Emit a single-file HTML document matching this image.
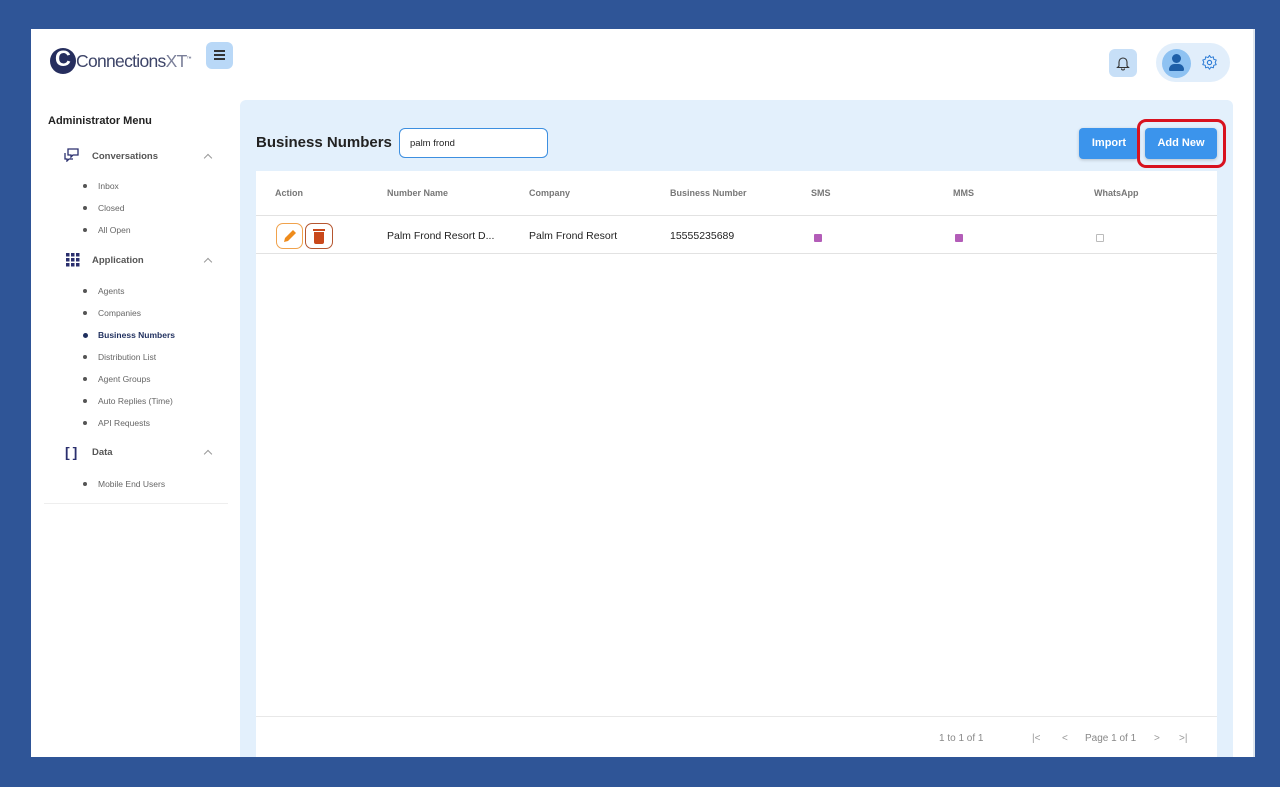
<!DOCTYPE html>
<html><head><style>
*{box-sizing:border-box;margin:0;padding:0}
body{width:1280px;height:787px;background:#2f5597;font-family:"Liberation Sans",Arial,sans-serif;position:relative;overflow:hidden}
.abs{position:absolute}
.page{left:31px;top:29px;width:1222px;height:728px;background:#fff}
.edge{left:1253px;top:29px;width:2px;height:728px;background:#dfe6ee}
.sub{position:absolute;font-size:8.5px;color:#666}
.dot{position:absolute;width:4px;height:4px;border-radius:50%;background:#555}
.hd{position:absolute;font-size:9.5px;color:#555;font-weight:bold}
.th{position:absolute;top:188px;font-size:9px;color:#777;font-weight:bold}
.td{position:absolute;top:230px;font-size:10.5px;color:#222}
.chev{position:absolute;width:6px;height:6px;border-left:1px solid #999;border-top:1px solid #999;transform:rotate(45deg)}
.cb{position:absolute;top:234px;width:8px;height:8px;border-radius:1px;background:#b35db8}
</style></head><body>
<div class="abs page"></div>
<div class="abs edge"></div>
<!-- logo -->
<div class="abs" style="left:50px;top:48px;width:26px;height:26px;border-radius:50%;background:#262e5e"></div>
<div class="abs" style="left:55px;top:46px;color:#fff;font-weight:bold;font-size:22px">C</div>
<div class="abs" style="left:76px;top:51px;font-size:17.5px;color:#3d4468;letter-spacing:-0.7px">Connections<span style="color:#7a7f99">XT</span><sup style="font-size:5px">™</sup></div>
<div class="abs" style="left:206px;top:42px;width:27px;height:27px;border-radius:6px;background:#b9d8f7"></div>
<div class="abs" style="left:214px;top:50px;width:11px;height:1.5px;background:#333;box-shadow:0 4px 0 #333,0 8px 0 #333"></div>
<!-- top right -->
<div class="abs" style="left:1109px;top:49px;width:28px;height:28px;border-radius:6px;background:#c7dff7"></div>
<svg class="abs" style="left:1116px;top:55px" width="14" height="16" viewBox="0 0 14 16"><path d="M3 11V7a4 4 0 0 1 8 0v4l1.5 1.5h-11z M5.5 13.5a1.5 1.5 0 0 0 3 0" fill="none" stroke="#333" stroke-width="1.1"/></svg>
<div class="abs" style="left:1156px;top:43px;width:74px;height:39px;border-radius:20px;background:#e1eefb"></div>
<div class="abs" style="left:1162px;top:49px;width:29px;height:29px;border-radius:50%;background:#8ec2f2"></div>
<div class="abs" style="left:1172px;top:54px;width:9px;height:9px;border-radius:50%;background:#1e5fa8"></div>
<div class="abs" style="left:1169px;top:64px;width:15px;height:7px;border-radius:7px 7px 2px 2px;background:#1e5fa8"></div>
<svg class="abs" style="left:1201px;top:54px" width="17" height="17" viewBox="0 0 24 24"><circle cx="12" cy="12" r="3" fill="none" stroke="#2d7cd6" stroke-width="1.6"/><path d="M12 2l2 3 3.5-1 .5 3.5 3.5 1-1.5 3.5 1.5 3-3.5 1-.5 3.5-3.5-1-2 3-2-3-3.5 1-.5-3.5-3.5-1 1.5-3.5L2.5 8.5 6 7.5 6.5 4 10 5z" fill="none" stroke="#2d7cd6" stroke-width="1.4" stroke-linejoin="round"/></svg>
<!-- sidebar -->
<div class="abs" style="left:48px;top:115px;font-size:11px;color:#222;font-weight:bold">Administrator Menu</div>
<svg class="abs" style="left:64px;top:148px" width="15" height="14" viewBox="0 0 15 14"><path d="M4 1h10v6h-5l-2 2V7H4z M1 5v6h2v2l2-2h4" fill="none" stroke="#2a2f6e" stroke-width="1.3"/></svg>
<div class="hd" style="left:92px;top:151px">Conversations</div>
<div class="chev" style="left:205px;top:155px"></div>
<div class="dot" style="left:83px;top:184px"></div><div class="sub" style="left:98px;top:181px">Inbox</div>
<div class="dot" style="left:83px;top:206px"></div><div class="sub" style="left:98px;top:203px">Closed</div>
<div class="dot" style="left:83px;top:228px"></div><div class="sub" style="left:98px;top:225px">All Open</div>
<svg class="abs" style="left:66px;top:253px" width="14" height="14" viewBox="0 0 14 14" fill="#2a2f6e"><rect x="0" y="0" width="3.5" height="3.5"/><rect x="5" y="0" width="3.5" height="3.5"/><rect x="10" y="0" width="3.5" height="3.5"/><rect x="0" y="5" width="3.5" height="3.5"/><rect x="5" y="5" width="3.5" height="3.5"/><rect x="10" y="5" width="3.5" height="3.5"/><rect x="0" y="10" width="3.5" height="3.5"/><rect x="5" y="10" width="3.5" height="3.5"/><rect x="10" y="10" width="3.5" height="3.5"/></svg>
<div class="hd" style="left:92px;top:255px">Application</div>
<div class="chev" style="left:205px;top:259px"></div>
<div class="dot" style="left:83px;top:289px"></div><div class="sub" style="left:98px;top:286px">Agents</div>
<div class="dot" style="left:83px;top:311px"></div><div class="sub" style="left:98px;top:308px">Companies</div>
<div class="dot" style="left:83px;top:333px;background:#1f2f5e;width:5px;height:5px"></div><div class="sub" style="left:98px;top:330px;color:#1f2f5e;font-weight:bold">Business Numbers</div>
<div class="dot" style="left:83px;top:355px"></div><div class="sub" style="left:98px;top:352px">Distribution List</div>
<div class="dot" style="left:83px;top:377px"></div><div class="sub" style="left:98px;top:374px">Agent Groups</div>
<div class="dot" style="left:83px;top:399px"></div><div class="sub" style="left:98px;top:396px">Auto Replies (Time)</div>
<div class="dot" style="left:83px;top:421px"></div><div class="sub" style="left:98px;top:418px">API Requests</div>
<div class="abs" style="left:65px;top:444px;font-size:14px;font-weight:bold;color:#2a2f6e;letter-spacing:3px">[]</div>
<div class="hd" style="left:92px;top:447px">Data</div>
<div class="chev" style="left:205px;top:451px"></div>
<div class="dot" style="left:83px;top:482px"></div><div class="sub" style="left:98px;top:479px">Mobile End Users</div>
<div class="abs" style="left:44px;top:503px;width:184px;height:1px;background:#eee"></div>
<!-- main -->
<div class="abs" style="left:240px;top:100px;width:993px;height:657px;background:#e3f0fc;border-radius:6px 6px 0 0"></div>
<div class="abs" style="left:256px;top:134px;font-size:15px;font-weight:bold;color:#222">Business Numbers</div>
<div class="abs" style="left:399px;top:128px;width:149px;height:30px;border:1.5px solid #3d8fe0;border-radius:6px;background:#fff;font-size:9.5px;padding:9px 10px;color:#222">palm frond</div>
<div class="abs" style="left:1079px;top:128px;width:60px;height:31px;border-radius:4px;background:#3b94ec;color:#fff;font-size:11px;font-weight:bold;text-align:center;line-height:31px;box-shadow:0 1px 3px rgba(0,0,0,.2)">Import</div>
<div class="abs" style="left:1145px;top:128px;width:72px;height:31px;border-radius:4px;background:#3b94ec;color:#fff;font-size:11px;font-weight:bold;text-align:center;line-height:31px;box-shadow:0 1px 3px rgba(0,0,0,.2)">Add New</div>
<div class="abs" style="left:1137px;top:119px;width:89px;height:49px;border:3px solid #d8121f;border-radius:9px"></div>
<div class="abs" style="left:256px;top:171px;width:961px;height:586px;background:#fff"></div>
<div class="th" style="left:275px">Action</div>
<div class="th" style="left:387px">Number Name</div>
<div class="th" style="left:529px">Company</div>
<div class="th" style="left:670px">Business Number</div>
<div class="th" style="left:811px">SMS</div>
<div class="th" style="left:953px">MMS</div>
<div class="th" style="left:1094px">WhatsApp</div>
<div class="abs" style="left:256px;top:215px;width:961px;height:1px;background:#e2e2e2"></div>
<div class="abs" style="left:256px;top:253px;width:961px;height:1px;background:#e2e2e2"></div>
<div class="abs" style="left:276px;top:223px;width:27px;height:26px;border:1.5px solid #f0a24c;border-radius:7px"></div>
<svg class="abs" style="left:282px;top:228px" width="16" height="16" viewBox="0 0 16 16"><path d="M2 14l1-4 8-8 3 3-8 8z" fill="#ee8b1c"/></svg>
<div class="abs" style="left:305px;top:223px;width:28px;height:26px;border:1.5px solid #b5562f;border-radius:7px"></div>
<div class="abs" style="left:313px;top:229px;width:12px;height:2px;background:#c9481b"></div>
<div class="abs" style="left:314px;top:232px;width:10px;height:12px;background:#c9481b;border-radius:0 0 2px 2px"></div>
<div class="td" style="left:387px">Palm Frond Resort D...</div>
<div class="td" style="left:529px">Palm Frond Resort</div>
<div class="td" style="left:670px">15555235689</div>
<div class="cb" style="left:814px"></div>
<div class="cb" style="left:955px"></div>
<div class="cb" style="left:1096px;background:#fff;border:1px solid #bbb"></div>
<div class="abs" style="left:256px;top:716px;width:961px;height:1px;background:#e8e8e8"></div>
<div class="abs" style="left:939px;top:733px;font-size:10px;color:#888">1 to 1 of 1</div>
<div class="abs" style="left:1032px;top:733px;font-size:10px;color:#999">|&lt;</div>
<div class="abs" style="left:1062px;top:733px;font-size:10px;color:#999">&lt;</div>
<div class="abs" style="left:1085px;top:733px;font-size:10px;color:#888">Page 1 of 1</div>
<div class="abs" style="left:1154px;top:733px;font-size:10px;color:#999">&gt;</div>
<div class="abs" style="left:1179px;top:733px;font-size:10px;color:#999">&gt;|</div>
</body></html>
